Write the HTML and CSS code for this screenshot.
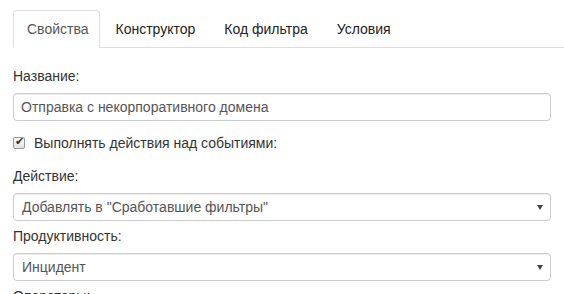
FILE: index.html
```html
<!DOCTYPE html>
<html lang="ru">
<head>
  <meta charset="UTF-8" />
  <title>Фильтр</title>
  <link rel="stylesheet" href="styles.css">
</head>
<body>
  <div class="panel">
    <ul class="tabs">
      <li class="active">Свойства</li>
      <li>Конструктор</li>
      <li>Код фильтра</li>
      <li>Условия</li>
    </ul>

    <div class="form-group">
      <label>Название:</label>
      <input type="text" class="form-control" value="Отправка с некорпоративного домена">
    </div>

    <div class="check-row">
      <input type="checkbox" class="check" checked>
      <span>Выполнять действия над событиями:</span>
    </div>

    <div class="form-group">
      <label>Действие:</label>
      <div class="select-box">
        <select class="form-control">
          <option>Добавлять в "Сработавшие фильтры"</option>
        </select>
      </div>
    </div>

    <div class="form-group">
      <label>Продуктивность:</label>
      <div class="select-box">
        <select class="form-control">
          <option>Инцидент</option>
        </select>
      </div>
    </div>

    <div class="form-group">
      <label>Операторы:</label>
    </div>
  </div>
</body>
</html>
```

FILE: styles.css
```css
body {
  margin: 0;
  font-family: "Liberation Sans", Arial, sans-serif;
  font-size: 14px;
  color: #333;
  background: #fff;
}

.panel {
  padding: 10px 13px 0 13px;
}

/* Tabs */
.tabs {
  list-style: none;
  margin: 0 -13px 18px 0;
  padding: 0;
  display: flex;
  border-bottom: 1px solid #ddd;
}

.tabs li {
  padding: 9px 13px 9px 12px;
  line-height: 18px;
  margin-right: 2px;
  margin-bottom: -1px;
  border: 1px solid transparent;
  border-radius: 4px 4px 0 0;
  color: #222;
  cursor: pointer;
}

.tabs li.active {
  padding: 9px 11px 9px 13px;
  border-color: #ddd;
  border-bottom-color: #fff;
  background: #fff;
  color: #555;
}

/* Form */
.form-group {
  margin-bottom: 5px;
}

.form-group label {
  display: block;
  line-height: 20px;
  margin-bottom: 7px;
}

.form-control {
  display: block;
  width: 100%;
  height: 28px;
  box-sizing: border-box;
  padding: 3px 7px;
  font-family: inherit;
  font-size: 14px;
  color: #555;
  background: #fff;
  border: 1px solid #ccc;
  border-radius: 4px;
  box-shadow: inset 0 1px 1px rgba(0, 0, 0, 0.075);
}

select.form-control {
  appearance: none;
  -webkit-appearance: none;
  padding-left: 8px;
}

.select-box {
  position: relative;
}

.select-box::after {
  content: "";
  position: absolute;
  right: 8px;
  top: 12px;
  border-left: 3px solid transparent;
  border-right: 3px solid transparent;
  border-top: 5px solid #444;
}

.check-row {
  display: flex;
  align-items: center;
  gap: 9px;
  height: 20px;
  margin: 12px 0 13px 0;
}

.check {
  appearance: none;
  -webkit-appearance: none;
  width: 12px;
  height: 12px;
  margin: 0;
  border: 1px solid #999;
  border-radius: 2px;
  background: linear-gradient(#fafafa, #e2e2e2);
  position: relative;
}

.check:checked::after {
  content: "\2714";
  position: absolute;
  left: 1px;
  top: -3px;
  font-size: 11px;
  color: #333;
}
```
